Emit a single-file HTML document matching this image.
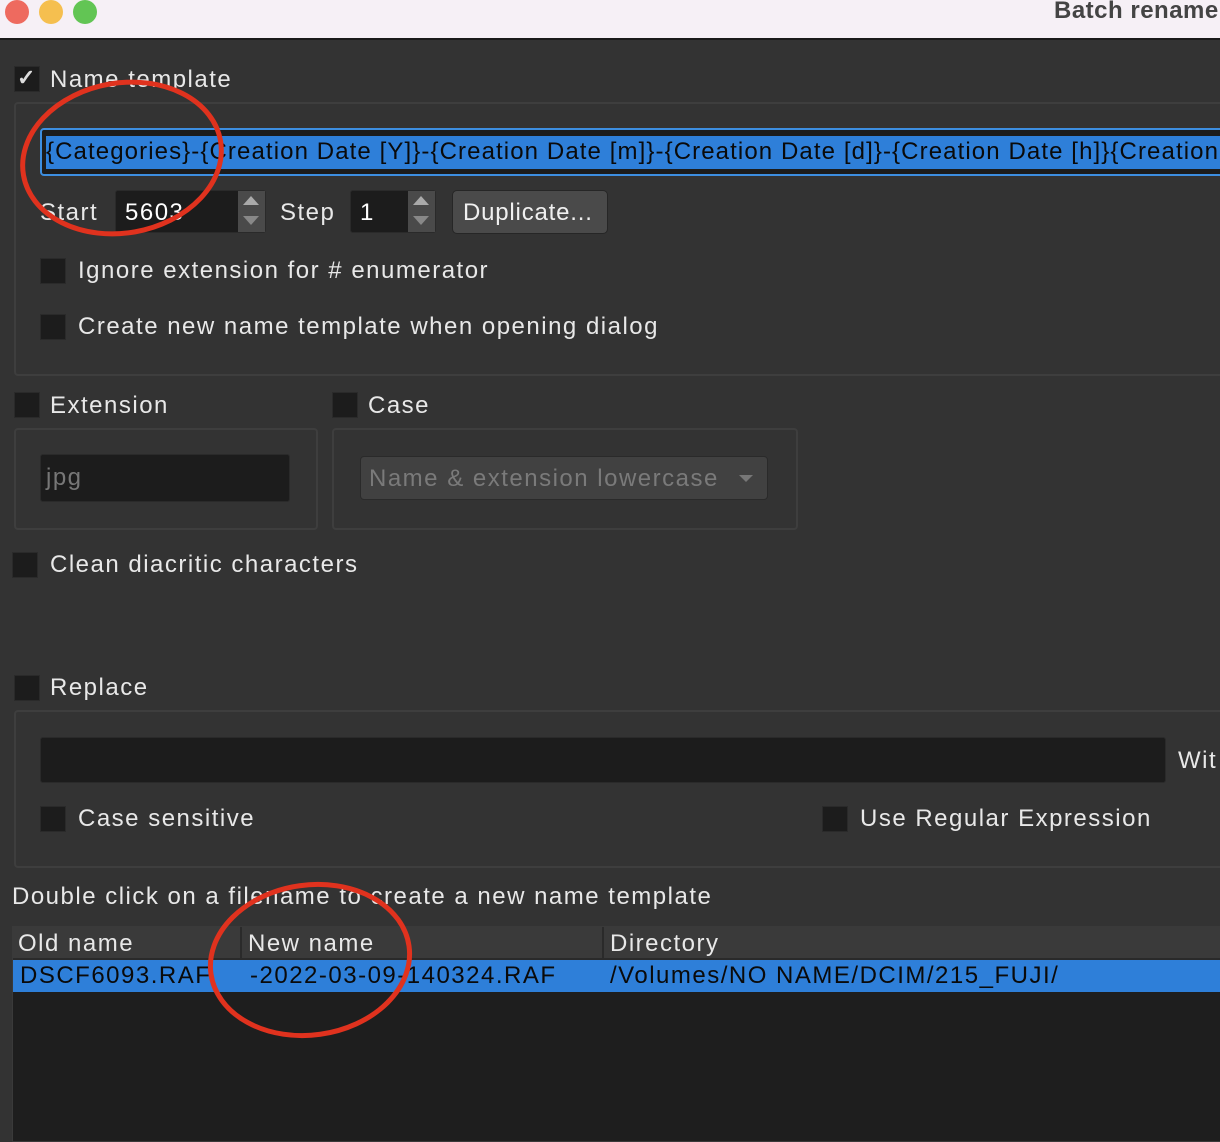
<!DOCTYPE html>
<html><head><style>
*{box-sizing:border-box;margin:0;padding:0}
body{width:1220px;height:1142px;overflow:hidden;background:#333333;font-family:"Liberation Sans",sans-serif;font-size:24px;letter-spacing:1.5px;color:#e8e8e8;position:relative}
.a{position:absolute;white-space:nowrap}
.cb{position:absolute;width:26px;height:26px;background:#1c1c1c;border:1px solid #2a2a2a}
.grp{position:absolute;border:2px solid #3e3e3e;border-radius:4px}
.t{position:absolute;line-height:28px;white-space:nowrap}
</style></head><body>
<div class="a" style="left:0;top:0;width:1220px;height:40px;background:#f6f0f6;border-bottom:2px solid #1a1a1a"></div>
<div class="a" style="left:5px;top:0;width:24px;height:24px;border-radius:50%;background:#ee6a5f"></div>
<div class="a" style="left:39px;top:0;width:24px;height:24px;border-radius:50%;background:#f5bf4f"></div>
<div class="a" style="left:73px;top:0;width:24px;height:24px;border-radius:50%;background:#62c554"></div>
<div class="t" style="left:1054px;top:-3px;color:#444;font-weight:bold;letter-spacing:0.5px">Batch rename</div>

<div class="cb" style="left:14px;top:66px;color:#ddd;font-size:22px;line-height:22px;text-align:center;font-weight:bold">✓</div>
<div class="t" style="left:50px;top:66px">Name template</div>
<div class="grp" style="left:14px;top:102px;width:1220px;height:274px"></div>
<div class="a" style="left:40px;top:128px;width:1200px;height:48px;border:2px solid #3d8ee0;border-radius:4px;background:#1c1c1c"></div>
<div class="a" style="left:46px;top:136px;width:1180px;height:33px;background:#2e7fd9"></div>
<div class="t" style="left:46px;top:138px;color:#0a0a0a;letter-spacing:1.1px">{Categories}-{Creation Date [Y]}-{Creation Date [m]}-{Creation Date [d]}-{Creation Date [h]}{Creation</div>

<div class="t" style="left:40px;top:199px">Start</div>
<div class="a" style="left:115px;top:190px;width:151px;height:43px;background:#1c1c1c;border:1px solid #2a2a2a;border-radius:3px"></div>
<div class="a" style="left:238px;top:191px;width:27px;height:41px;background:#4a4a4a"></div>
<div class="t" style="left:125px;top:199px;color:#fff">5603</div>
<div class="a" style="left:243px;top:196px;border-left:8px solid transparent;border-right:8px solid transparent;border-bottom:9px solid #aaa"></div>
<div class="a" style="left:243px;top:216px;border-left:8px solid transparent;border-right:8px solid transparent;border-top:9px solid #888"></div>
<div class="t" style="left:280px;top:199px">Step</div>
<div class="a" style="left:350px;top:190px;width:86px;height:43px;background:#1c1c1c;border:1px solid #2a2a2a;border-radius:3px"></div>
<div class="a" style="left:408px;top:191px;width:27px;height:41px;background:#4a4a4a"></div>
<div class="t" style="left:360px;top:199px;color:#fff">1</div>
<div class="a" style="left:413px;top:196px;border-left:8px solid transparent;border-right:8px solid transparent;border-bottom:9px solid #aaa"></div>
<div class="a" style="left:413px;top:216px;border-left:8px solid transparent;border-right:8px solid transparent;border-top:9px solid #888"></div>
<div class="a" style="left:452px;top:190px;width:156px;height:44px;background:#4a4a4a;border:1px solid #262626;border-radius:5px"></div>
<div class="t" style="left:463px;top:199px;color:#f0f0f0;letter-spacing:0.8px">Duplicate...</div>

<div class="cb" style="left:40px;top:258px"></div>
<div class="t" style="left:78px;top:257px">Ignore extension for # enumerator</div>
<div class="cb" style="left:40px;top:314px"></div>
<div class="t" style="left:78px;top:313px">Create new name template when opening dialog</div>

<div class="cb" style="left:14px;top:392px"></div>
<div class="t" style="left:50px;top:392px">Extension</div>
<div class="cb" style="left:332px;top:392px"></div>
<div class="t" style="left:368px;top:392px">Case</div>
<div class="grp" style="left:14px;top:428px;width:304px;height:102px"></div>
<div class="a" style="left:40px;top:454px;width:250px;height:48px;background:#1c1c1c;border:1px solid #2a2a2a;border-radius:3px"></div>
<div class="t" style="left:46px;top:464px;color:#777">jpg</div>
<div class="grp" style="left:332px;top:428px;width:466px;height:102px"></div>
<div class="a" style="left:360px;top:456px;width:408px;height:44px;background:#414141;border:1px solid #2a2a2a;border-radius:4px"></div>
<div class="t" style="left:369px;top:465px;color:#7a7a7a">Name &amp; extension lowercase</div>
<div class="a" style="left:739px;top:475px;border-left:7px solid transparent;border-right:7px solid transparent;border-top:7px solid #777"></div>

<div class="cb" style="left:12px;top:552px"></div>
<div class="t" style="left:50px;top:551px">Clean diacritic characters</div>

<div class="cb" style="left:14px;top:675px"></div>
<div class="t" style="left:50px;top:674px">Replace</div>
<div class="grp" style="left:14px;top:710px;width:1220px;height:158px"></div>
<div class="a" style="left:40px;top:737px;width:1126px;height:46px;background:#1c1c1c;border:1px solid #2a2a2a;border-radius:3px"></div>
<div class="t" style="left:1178px;top:747px">Wit</div>
<div class="cb" style="left:40px;top:806px"></div>
<div class="t" style="left:78px;top:805px">Case sensitive</div>
<div class="cb" style="left:822px;top:806px"></div>
<div class="t" style="left:860px;top:805px">Use Regular Expression</div>

<div class="t" style="left:12px;top:883px">Double click on a filename to create a new name template</div>
<div class="a" style="left:12px;top:926px;width:1220px;height:216px;background:#1e1e1e;border:1px solid #3a3a3a"></div>
<div class="a" style="left:13px;top:927px;width:1210px;height:33px;background:#3a3a3a;border-bottom:2px solid #2a2a2a"></div>
<div class="a" style="left:240px;top:927px;width:2px;height:33px;background:#2a2a2a"></div>
<div class="a" style="left:602px;top:927px;width:2px;height:33px;background:#2a2a2a"></div>
<div class="t" style="left:18px;top:930px">Old name</div>
<div class="t" style="left:248px;top:930px">New name</div>
<div class="t" style="left:610px;top:930px">Directory</div>
<div class="a" style="left:13px;top:960px;width:1210px;height:32px;background:#2e7fd9"></div>
<div class="t" style="left:20px;top:962px;color:#0a0a0a">DSCF6093.RAF</div>
<div class="t" style="left:250px;top:962px;color:#0a0a0a">-2022-03-09-140324.RAF</div>
<div class="t" style="left:610px;top:962px;color:#0a0a0a">/Volumes/NO NAME/DCIM/215_FUJI/</div>

<svg class="a" style="left:0;top:0" width="1220" height="1142">
<ellipse cx="122" cy="158" rx="100" ry="75" transform="rotate(-10 122 158)" fill="none" stroke="#e0321e" stroke-width="5"/>
<ellipse cx="310" cy="960" rx="100" ry="75" transform="rotate(-8 310 960)" fill="none" stroke="#e0321e" stroke-width="5"/>
</svg>
</body></html>
